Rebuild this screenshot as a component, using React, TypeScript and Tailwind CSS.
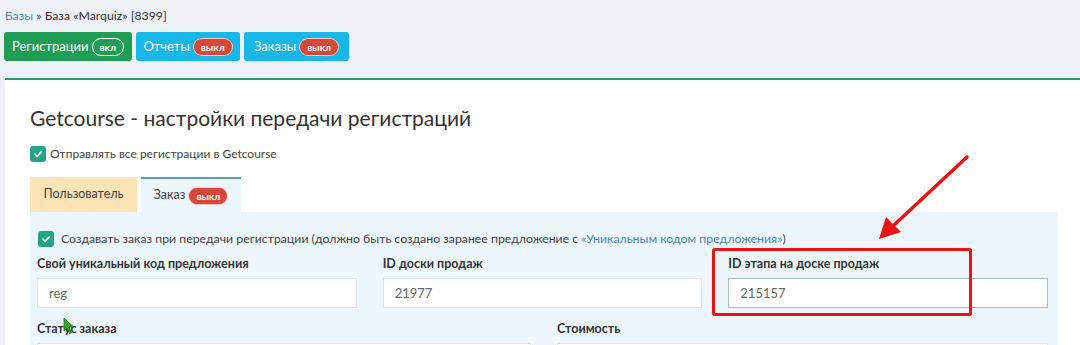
import React from 'react';

const Badge: React.FC<{ on?: boolean }> = ({ on }) =>
    on ? (
        <span className="ml-[3px] inline-flex h-[18px] items-center rounded-full border border-white px-[7px] text-[10px] font-bold leading-none">вкл</span>
    ) : (
        <span className="ml-[3px] inline-flex h-[18px] items-center rounded-full border border-white/70 bg-[#d9473b] px-[7px] text-[10px] font-bold leading-none text-white">выкл</span>
    );

const Check: React.FC<{ className?: string }> = ({ className }) => (
    <span className={`inline-flex h-[16px] w-[16px] shrink-0 items-center justify-center rounded-[3px] bg-[#22a585] ${className ?? ''}`}>
        <svg width="10" height="10" viewBox="0 0 10 10" fill="none">
            <path d="M2 5.2 L4.2 7.3 L8.2 2.8" stroke="white" strokeWidth="1.8" strokeLinecap="round" strokeLinejoin="round" />
        </svg>
    </span>
);

const Field: React.FC<{ label: string; value?: string; focused?: boolean }> = ({ label, value, focused }) => (
    <div>
        <div className="h-[26px] text-[12.5px] font-bold leading-[26px] text-[#333]">{label}</div>
        <div className={`mt-[1px] flex h-[30px] items-center border bg-white px-[11px] text-[13px] text-[#666] ${focused ? 'border-[#a9bccb]' : 'border-[#dfe5ea]'}`}>
            {value}
        </div>
    </div>
);

const App: React.FC = () => {
    return (
        <div className="relative h-[345px] w-[1080px] overflow-hidden bg-[#edf0f4] font-['Lato','Open_Sans',sans-serif]">
            {/* Breadcrumb */}
            <div className="pl-[5px] pt-[8px] text-[12.3px] leading-[16px] text-[#333]">
                <span className="text-[#5b87b3]">Базы</span> » База «Marquiz» [8399]
            </div>

            {/* Integration buttons */}
            <div className="mt-[8px] flex gap-[4px] pl-[4px]">
                <button className="flex h-[29px] w-[128px] items-center justify-center rounded-[3px] bg-[#1f9d55] text-[13px] text-white">
                    Регистрации <Badge on />
                </button>
                <button className="flex h-[29px] w-[104px] items-center justify-center rounded-[3px] bg-[#17b8e8] text-[13px] text-white">
                    Отчеты <Badge />
                </button>
                <button className="flex h-[29px] w-[105px] items-center justify-center rounded-[3px] bg-[#17b8e8] text-[13px] text-white">
                    Заказы <Badge />
                </button>
            </div>

            {/* Card */}
            <div className="ml-[5px] mt-[17px] border-t-2 border-[#2f9a6c] bg-white pl-[25px] pt-[25px]">
                <h1 className="text-[21px] leading-[26px] text-[#333]">Getcourse - настройки передачи регистраций</h1>

                <label className="mt-[14px] flex items-center gap-[4px] text-[12px] text-[#444]">
                    <Check />
                    Отправлять все регистрации в Getcourse
                </label>

                {/* Tabs */}
                <div className="mt-[14px] flex gap-[4px]">
                    <div className="flex h-[35px] w-[107px] items-center justify-center bg-[#fde3b6] text-[12.5px] text-[#444]">Пользователь</div>
                    <div className="flex h-[35px] w-[100px] items-center justify-center border-t-2 border-[#5f9cc4] bg-[#eef6fd] text-[12.5px] text-[#444]">
                        Заказ <Badge />
                    </div>
                </div>

                <div className="mr-[22px] bg-[#eef6fd] pb-[20px] pl-[7px] pr-[10px] pt-[18px]">
                    <label className="flex items-center gap-[7px] pl-[1px] text-[12.3px] text-[#444]">
                        <Check />
                        <span>
                            Создавать заказ при передачи регистрации (должно быть создано заранее предложение с{' '}
                            <span className="text-[#4a86b8]">«Уникальным кодом предложения»</span>)
                        </span>
                    </label>
                    <div className="mt-[3px] grid grid-cols-3 gap-x-[26px]">
                        <Field label="Свой уникальный код предложения" value="reg" />
                        <Field label="ID доски продаж" value="21977" />
                        <Field label="ID этапа на доске продаж" value="215157" focused />
                    </div>
                    <div className="mt-[8px] grid grid-cols-[494px_1fr] gap-x-[26px]">
                        <Field label="Статус заказа" />
                        <Field label="Стоимость" />
                    </div>
                </div>
            </div>

            {/* Annotation: red box and arrow */}
            <div className="absolute left-[712px] top-[248px] h-[68px] w-[260px] rounded-[3px] border-[3px] border-[#ee1111]" />
            <svg className="absolute left-0 top-0" width="1080" height="345" viewBox="0 0 1080 345">
                <line x1="967" y1="157" x2="893" y2="226" stroke="#ee1111" strokeWidth="3.5" strokeLinecap="round" />
                <polygon points="879,239 886,217 901,232" fill="#ee1111" />
            </svg>

            {/* Mouse cursor */}
            <svg className="absolute left-[63px] top-[317px]" width="12" height="18" viewBox="0 0 12 18">
                <path d="M1 1 L1 14 L4 11 L6.5 16.5 L8.5 15.5 L6 10 L10.5 10 Z" fill="#2fa32a" stroke="#1a6e17" strokeWidth="0.8" />
            </svg>
        </div>
    );
};

export default App;
